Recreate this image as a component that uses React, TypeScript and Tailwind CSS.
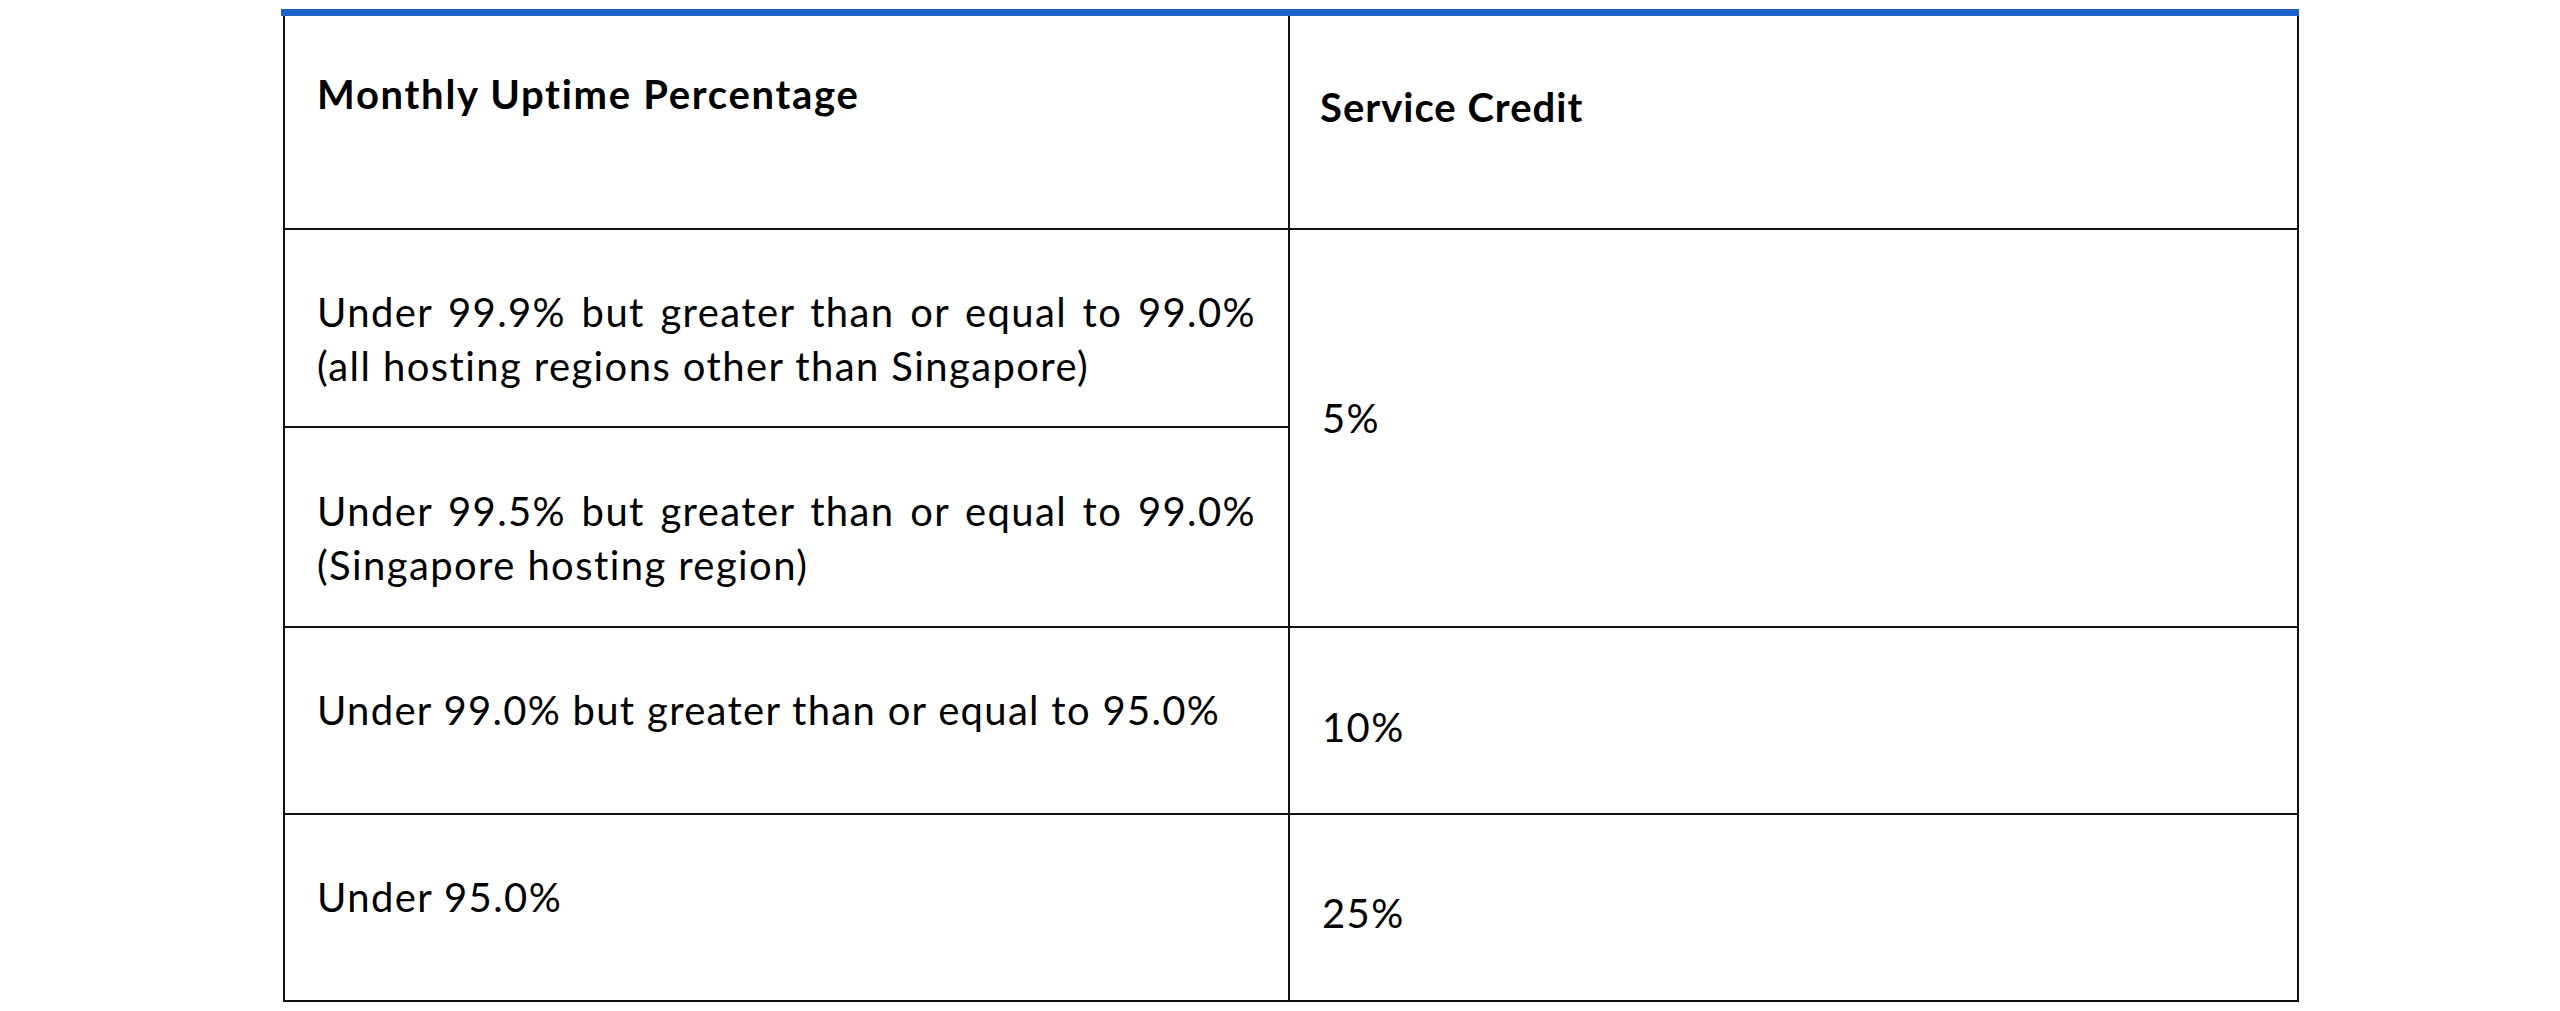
import React from "react";

const font = { fontFamily: "Lato, 'Liberation Sans', sans-serif" };

export default function App() {
  return (
    <div className="min-h-screen bg-white text-black" style={font}>
      <div className="pt-[9px] pl-[281px]">
        <div className="w-[2018px] h-[7px] bg-[#1f5fc8]" />
        <div className="ml-[2px] w-[2016px] border-x-2 border-[#111] text-[40px] leading-[54px] tracking-[1.4px]">
          {/* header */}
          <div className="flex h-[214px] border-b-2 border-[#111]">
            <div className="w-[1005px] border-r-2 border-[#111] pl-[32px] pt-[51px] font-bold tracking-[1.7px]">
              Monthly Uptime Percentage
            </div>
            <div className="flex-1 pl-[30px] pt-[64px] font-bold tracking-[1px]">
              Service Credit
            </div>
          </div>
          {/* row 1 merged */}
          <div className="flex h-[398px] border-b-2 border-[#111]">
            <div className="w-[1005px] border-r-2 border-[#111] flex flex-col">
              <div className="h-[198px] border-b-2 border-[#111] pl-[32px] pr-[32px] pt-[55px]">
                <div className="text-justify [text-align-last:justify]">Under 99.9% but greater than or equal to 99.0%</div>
                <div>(all hosting regions other than Singapore)</div>
              </div>
              <div className="flex-1 pl-[32px] pr-[32px] pt-[56px]">
                <div className="text-justify [text-align-last:justify]">Under 99.5% but greater than or equal to 99.0%</div>
                <div>(Singapore hosting region)</div>
              </div>
            </div>
            <div className="flex-1 pl-[32px] pt-[161px]">5%</div>
          </div>
          {/* row 3 */}
          <div className="flex h-[187px] border-b-2 border-[#111]">
            <div className="w-[1005px] border-r-2 border-[#111] pl-[32px] pt-[55px] tracking-[1.3px]">
              Under 99.0% but greater than or equal to 95.0%
            </div>
            <div className="flex-1 pl-[32px] pt-[72px]">10%</div>
          </div>
          {/* row 4 */}
          <div className="flex h-[187px] border-b-2 border-[#111]">
            <div className="w-[1005px] border-r-2 border-[#111] pl-[32px] pt-[55px]">
              Under 95.0%
            </div>
            <div className="flex-1 pl-[32px] pt-[71px]">25%</div>
          </div>
        </div>
      </div>
    </div>
  );
}
